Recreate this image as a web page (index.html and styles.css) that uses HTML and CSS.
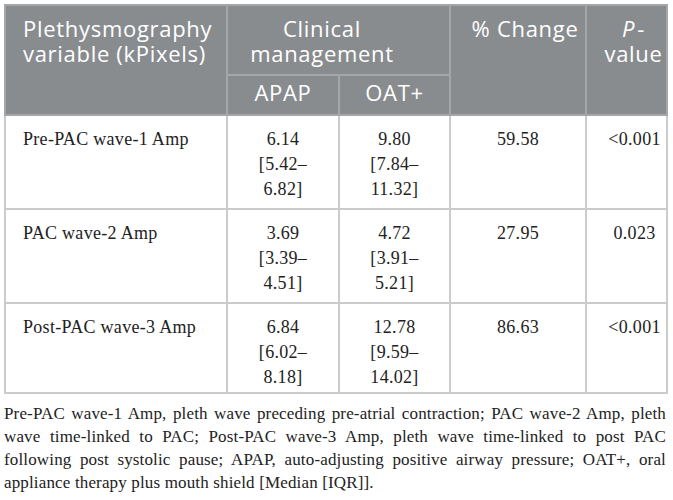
FILE: index.html
```html
<!DOCTYPE html>
<html>
<head>
<meta charset="utf-8">
<link rel="stylesheet" href="styles.css">
</head>
<body>
<table class="data">
  <colgroup>
    <col class="c1"><col class="c2"><col class="c3"><col class="c4"><col class="c5">
  </colgroup>
  <thead>
    <tr class="h1">
      <th rowspan="2" class="left">Plethysmography variable (kPixels)</th>
      <th colspan="2" class="group">Clinical management</th>
      <th rowspan="2" class="side">% Change</th>
      <th rowspan="2" class="side"><i class="pi">P</i>-value</th>
    </tr>
    <tr class="h2">
      <th class="sub">APAP</th>
      <th class="sub">OAT+</th>
    </tr>
  </thead>
  <tbody>
    <tr>
      <td class="left">Pre-PAC wave-1 Amp</td>
      <td>6.14<br>[5.42–<br>6.82]</td>
      <td>9.80<br>[7.84–<br>11.32]</td>
      <td>59.58</td>
      <td class="pv">&lt;0.001</td>
    </tr>
    <tr>
      <td class="left">PAC wave-2 Amp</td>
      <td>3.69<br>[3.39–<br>4.51]</td>
      <td>4.72<br>[3.91–<br>5.21]</td>
      <td>27.95</td>
      <td class="pv">0.023</td>
    </tr>
    <tr class="last">
      <td class="left">Post-PAC wave-3 Amp</td>
      <td>6.84<br>[6.02–<br>8.18]</td>
      <td>12.78<br>[9.59–<br>14.02]</td>
      <td>86.63</td>
      <td class="pv">&lt;0.001</td>
    </tr>
  </tbody>
</table>
<p class="note">Pre-PAC wave-1 Amp, pleth wave preceding pre-atrial contraction; PAC wave-2 Amp, pleth wave time-linked to PAC; Post-PAC wave-3 Amp, pleth wave time-linked to post PAC following post systolic pause; APAP, auto-adjusting positive airway pressure; OAT+, oral appliance therapy plus mouth shield [Median [IQR]].</p>
</body>
</html>
```
FILE: styles.css
```css
html, body {
  margin: 0;
  padding: 0;
  background: #ffffff;
}
body {
  padding: 4px 7px 0 4px;
}
.data {
  border-collapse: collapse;
  width: 662px;
  table-layout: fixed;
  border: 2px solid #cbcbcb;
}
.c1 { width: 222px; }
.c2 { width: 112px; }
.c3 { width: 111px; }
.c4 { width: 136px; }
.c5 { width: 81px; }
th {
  background: #898c8f;
  color: #ffffff;
  font-family: "Open Sans", "Noto Sans", sans-serif;
  font-weight: 400;
  font-size: 22px;
  letter-spacing: 0.7px;
  line-height: 25px;
  vertical-align: top;
  text-align: center;
  border: 2px solid #a4a7a9;
  padding: 10px 3px 8px 17px;
}
th.left { text-align: left; }
th.group { padding-right: 50px; }
th.sub { padding: 4px 3px 9px 3px; }
th i { font-style: italic; }
th .pi { margin-right: 2px; }
.h1 th { height: 50px; }
.h2 th { height: 25px; }
td {
  font-family: "Liberation Serif", "Times New Roman", serif;
  font-size: 18px;
  letter-spacing: 0.3px;
  line-height: 25px;
  color: #222222;
  vertical-align: top;
  text-align: center;
  border: 2px solid #cbcbcb;
  padding: 11px 4px 6px 4px;
  height: 75px;
}
.last td { padding-bottom: 2px; height: 73px; }
td.left { text-align: left; padding-left: 17px; }
td.pv { padding-left: 18px; padding-right: 2px; }
.note {
  margin: 8px 0 0 0;
  width: 662px;
  font-family: "Liberation Serif", "Times New Roman", serif;
  font-size: 17px;
  letter-spacing: 0.15px;
  line-height: 23px;
  color: #222222;
  text-align: justify;
}
```
